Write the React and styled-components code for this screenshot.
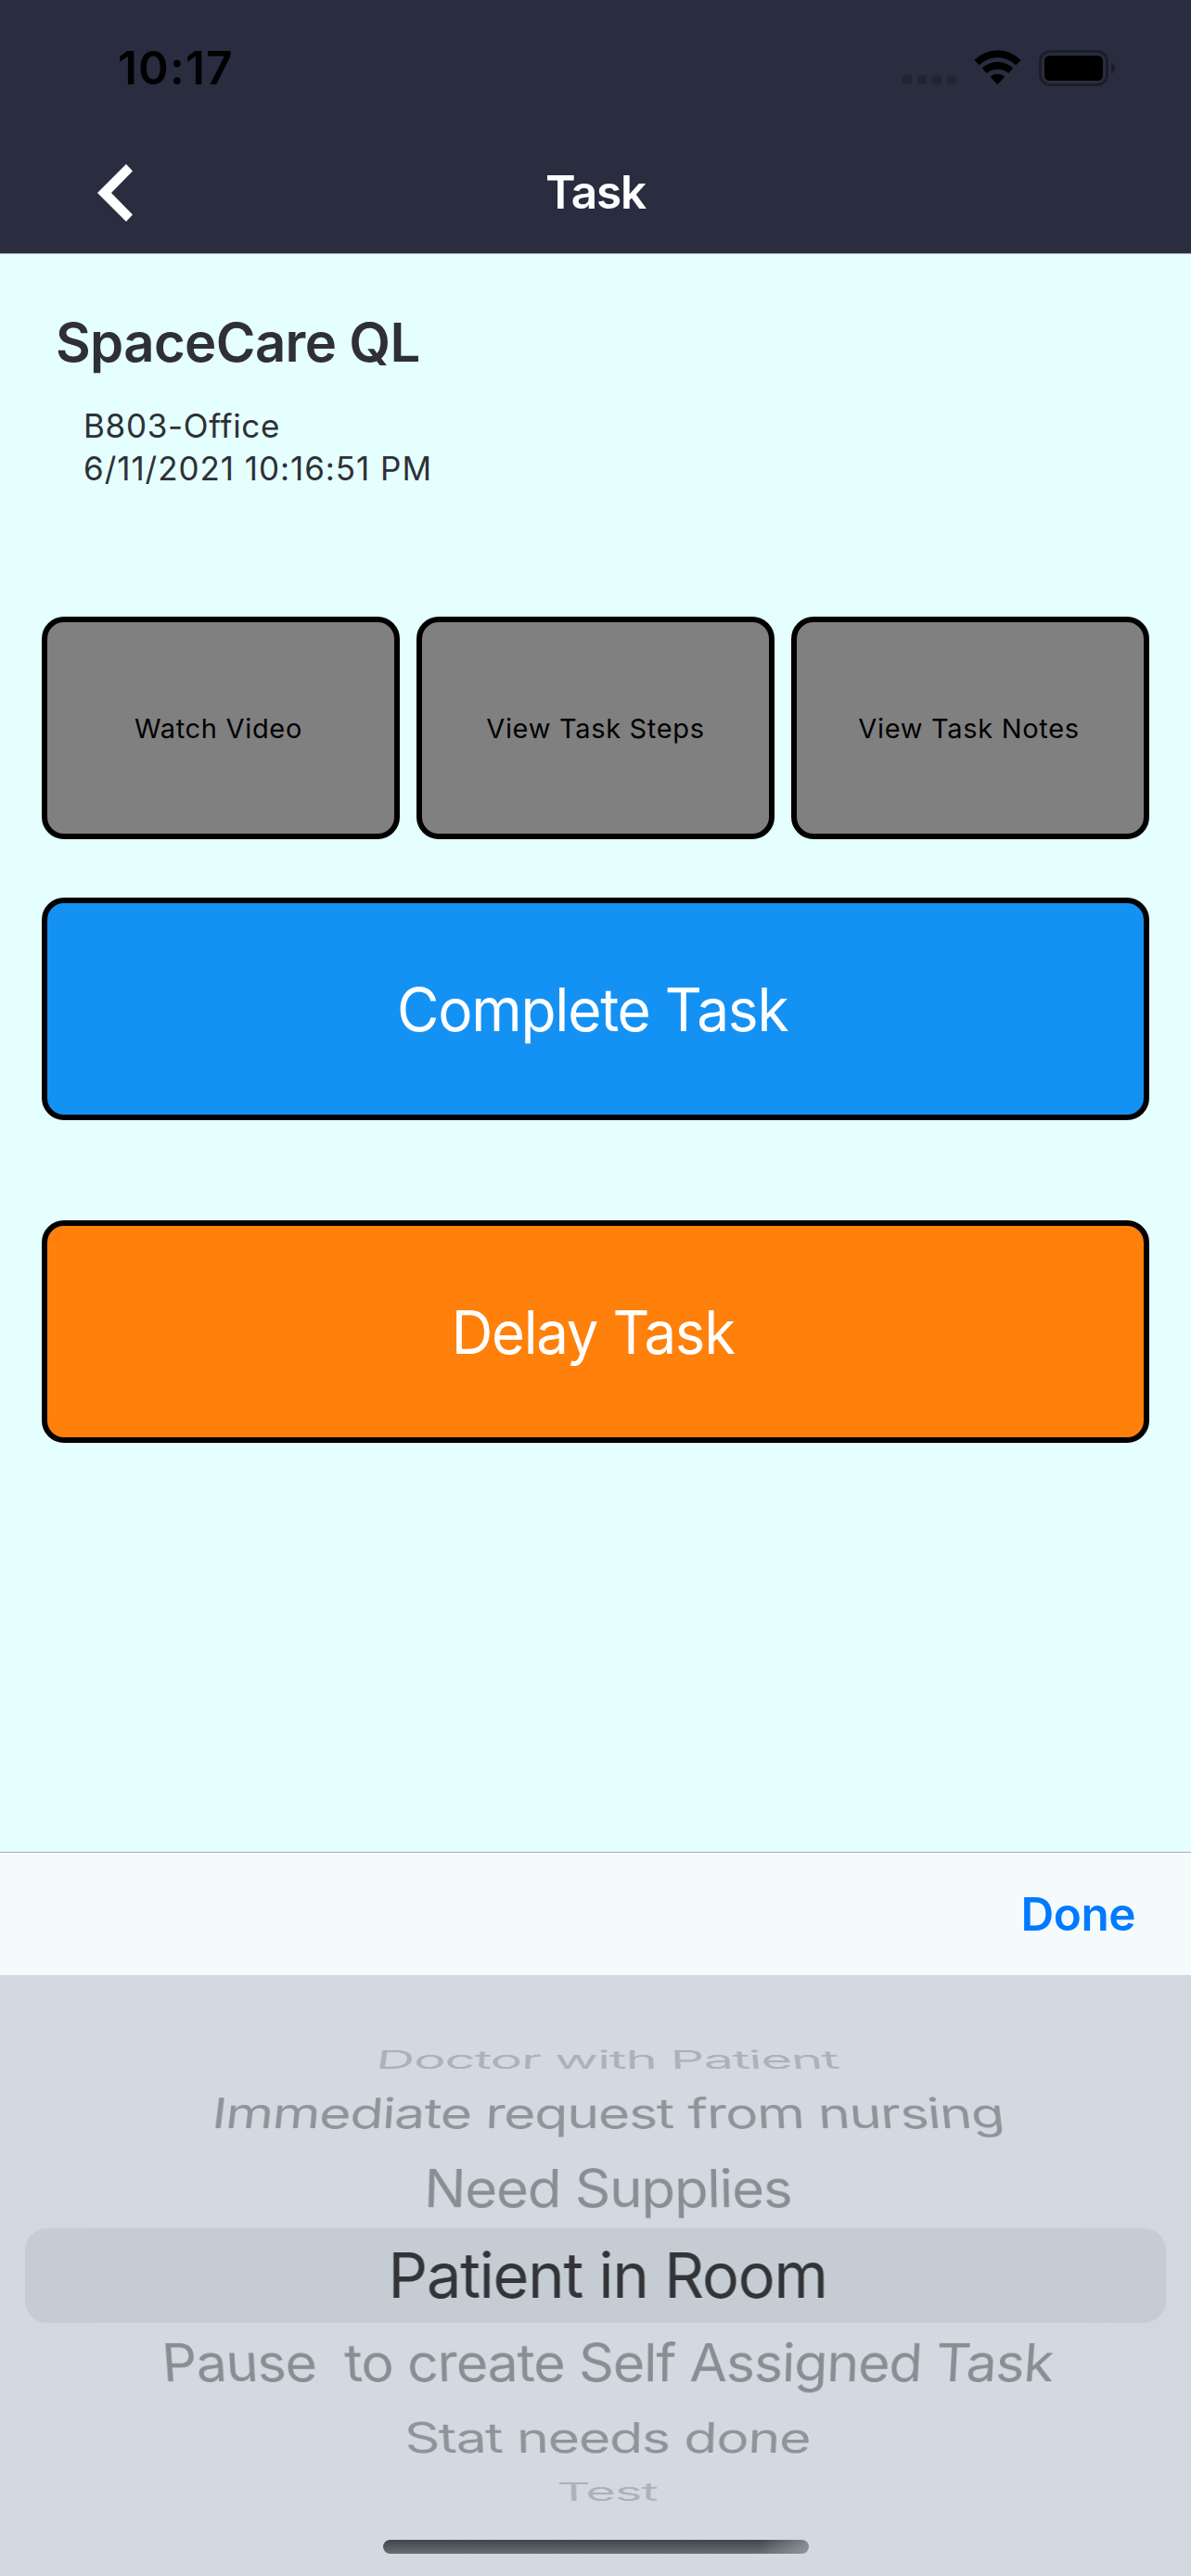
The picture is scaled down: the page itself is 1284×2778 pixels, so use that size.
import React from "react";
import styled, { createGlobalStyle } from "styled-components";

const GlobalStyle = createGlobalStyle`
  * { box-sizing: border-box; }
  body {
    margin: 0;
    font-family: Inter, "Liberation Sans", sans-serif;
    color: #2e3036;
  }
  button { font-family: inherit; padding: 0; cursor: pointer; }
`;

const Screen = styled.div`
  display: flex;
  flex-direction: column;
  width: 1284px;
  height: 2778px;
  overflow: hidden;
  background: #e5fefe;
`;

const Header = styled.header`
  display: flex;
  flex-direction: column;
  height: 274px;
  background: #2a2c3f;
  border-bottom: 1px solid #a4a7b3;
`;

const StatusBar = styled.div`
  display: flex;
  justify-content: space-between;
  align-items: center;
  height: 146px;
  padding: 0 82px 0 127px;
`;

const Time = styled.span`
  font-size: 49.5px;
  font-weight: 600;
  letter-spacing: 1.18px;
  line-height: 60px;
  color: #000;
`;

const StatusIcons = styled.div`
  display: flex;
  align-items: center;
`;

const CellDots = styled.div`
  display: flex;
  gap: 6px;
  margin: 26px 19px 0 0;
`;

const Dot = styled.i`
  width: 10px;
  height: 10px;
  border-radius: 3px;
  background: #222431;
`;

const WifiIcon = styled.svg`
  width: 51px;
  height: 38px;
  margin-right: 19px;
`;

const BatteryIcon = styled.svg`
  width: 82px;
  height: 39px;
`;

const NavBar = styled.nav`
  display: grid;
  grid-template-columns: 1fr auto 1fr;
  align-items: center;
  height: 122px;
`;

const BackButton = styled.button`
  display: flex;
  justify-self: start;
  margin: 2px 0 0 105px;
  border: 0;
  background: none;
`;

const NavTitle = styled.h1`
  margin: 0;
  font-size: 49.5px;
  font-weight: 600;
  letter-spacing: -1.2px;
  line-height: 60px;
  color: #fff;
`;

const Content = styled.main`
  flex: 1;
  padding: 65px 45px 0;
`;

const TaskName = styled.h2`
  margin: 0 0 37px 15px;
  font-size: 58px;
  font-weight: 600;
  line-height: 60px;
  letter-spacing: -0.62px;
`;

const Meta = styled.p`
  margin: 0 0 0 45px;
  font-size: 35px;
  line-height: 46px;
  letter-spacing: ${(p) => p.$tracking}px;
`;

const SmallButtons = styled.div`
  display: grid;
  grid-template-columns: repeat(3, 1fr);
  gap: 18px;
  margin: 137px 0 63px;
`;

const BoxButton = styled.button`
  height: 240px;
  border: 6px solid #000;
  border-radius: 24px;
`;

const SmallButton = styled(BoxButton)`
  padding-right: ${(p) => p.$inset || 0}px;
  background: #808080;
  color: #000;
  font-size: 29px;
  letter-spacing: 0.68px;
`;

const BigButton = styled(BoxButton)`
  display: flex;
  align-items: center;
  justify-content: center;
  width: 100%;
  margin-bottom: 108px;
  padding: 1px 6px 0 0;
  background: ${(p) => p.$color};
  color: #fff;
  font-size: 64px;
  letter-spacing: -1.3px;
`;

const Condensed = styled.span`
  transform: scaleX(${(p) => p.$stretch});
`;

const Toolbar = styled.div`
  display: flex;
  align-items: center;
  justify-content: flex-end;
  height: 133px;
  padding-right: 60px;
  background: #f5fbfb;
  border-top: 1px solid #9db2b2;
`;

const DoneButton = styled.button`
  border: 0;
  background: none;
  color: #007aff;
  font-size: 49.5px;
  font-weight: 600;
  line-height: 60px;
  letter-spacing: -0.5px;
`;

const Picker = styled.div`
  display: flex;
  flex-direction: column;
  height: 648px;
  padding: 70px 27px 24px;
  background: linear-gradient(
    90deg,
    #d3d8e1 0,
    #d3d7e0 85px,
    #d2d9e1 105px,
    #d2d9e1 1150px,
    #d3d7e0 1240px
  );
`;

const PickerRow = styled.div`
  display: flex;
  flex: none;
  align-items: center;
  justify-content: center;
  height: ${(p) => p.$height}px;
  padding-left: 26px;
  border-radius: 24px;
  background: ${(p) => (p.$selected ? "#c6ccd4" : "transparent")};
`;

const PickerText = styled.span`
  flex: none;
  white-space: pre;
  color: ${(p) => p.$color};
  font-size: ${(p) => p.$size || 64}px;
  line-height: 80px;
  letter-spacing: -1.3px;
  transform: perspective(3500px) rotateX(${(p) => p.$tilt}deg) scaleX(${(p) => p.$stretch});
`;

const HomeIndicator = styled.div`
  align-self: center;
  width: 459px;
  height: 15px;
  margin-top: auto;
  border-radius: 8px;
  background:
    linear-gradient(100deg, transparent 88%, rgba(170, 175, 180, 0.65) 100%),
    linear-gradient(#414549, #6a6e72);
`;

const reasons = [
  { label: "Doctor with Patient", height: 42, tilt: 65, stretch: 0.903, color: "#adb1b9" },
  { label: "Immediate request from nursing", height: 74, tilt: 45.5, stretch: 0.92, color: "#8f9498" },
  { label: "Need Supplies", height: 87, tilt: 28.7, stretch: 0.937, color: "#8a8e92" },
  { label: "Patient in Room", height: 102, tilt: 0, stretch: 0.99, color: "#333437", size: 67.5, selected: true },
  { label: "Pause  to create Self Assigned Task", height: 86, tilt: -28.7, stretch: 0.9255, color: "#8a8e92" },
  { label: "Stat needs done", height: 76, tilt: -46, stretch: 0.923, color: "#8f9498" },
  { label: "Test", height: 39, tilt: -65, stretch: 0.88, color: "#adb1b9" },
];

function Wifi() {
  return (
    <WifiIcon viewBox="0 0 51 38" fill="#000">
      <path d="M.4 10.8A35 35 0 0 1 50.6 10.8L45.2 16.2A28 28 0 0 0 5.8 16.2Z" />
      <path d="M9 19.4A24 24 0 0 1 42 19.4L37.4 25A19 19 0 0 0 13.6 25Z" />
      <path d="M17.7 29A11 11 0 0 1 33.1 29L25.4 37.2Z" />
    </WifiIcon>
  );
}

function Battery() {
  return (
    <BatteryIcon viewBox="0 0 82 39">
      <rect x="1.5" y="1.5" width="72" height="36" rx="10.5" fill="none" stroke="#1c1d29" strokeWidth="3" />
      <rect x="6" y="6" width="63" height="27" rx="5.5" fill="#000" />
      <path d="M78 13.5Q82 15.5 82 19.5T78 25.5Z" fill="#1c1d29" />
    </BatteryIcon>
  );
}

export default function App() {
  return (
    <Screen>
      <GlobalStyle />
      <Header>
        <StatusBar>
          <Time>10:17</Time>
          <StatusIcons>
            <CellDots>
              <Dot />
              <Dot />
              <Dot />
              <Dot />
            </CellDots>
            <Wifi />
            <Battery />
          </StatusIcons>
        </StatusBar>
        <NavBar>
          <BackButton aria-label="Back">
            <svg width="38" height="62" viewBox="0 0 38 62">
              <path d="M31 0L38 7.4L15 31L38 54.6L31 62L0 31Z" fill="#fff" />
            </svg>
          </BackButton>
          <NavTitle>Task</NavTitle>
        </NavBar>
      </Header>
      <Content>
        <TaskName>SpaceCare QL</TaskName>
        <Meta $tracking={0.69}>B803-Office</Meta>
        <Meta $tracking={0.95}>6/11/2021 10:16:51 PM</Meta>
        <SmallButtons>
          <SmallButton $inset={5}>Watch Video</SmallButton>
          <SmallButton>View Task Steps</SmallButton>
          <SmallButton $inset={3}>View Task Notes</SmallButton>
        </SmallButtons>
        <BigButton $color="#1492f4">
          <Condensed $stretch={0.972}>Complete Task</Condensed>
        </BigButton>
        <BigButton $color="#ff800b">
          <Condensed $stretch={0.964}>Delay Task</Condensed>
        </BigButton>
      </Content>
      <Toolbar>
        <DoneButton>Done</DoneButton>
      </Toolbar>
      <Picker>
        {reasons.map((r) => (
          <PickerRow key={r.label} $height={r.height} $selected={r.selected}>
            <PickerText $color={r.color} $size={r.size} $tilt={r.tilt} $stretch={r.stretch}>
              {r.label}
            </PickerText>
          </PickerRow>
        ))}
        <HomeIndicator />
      </Picker>
    </Screen>
  );
}
